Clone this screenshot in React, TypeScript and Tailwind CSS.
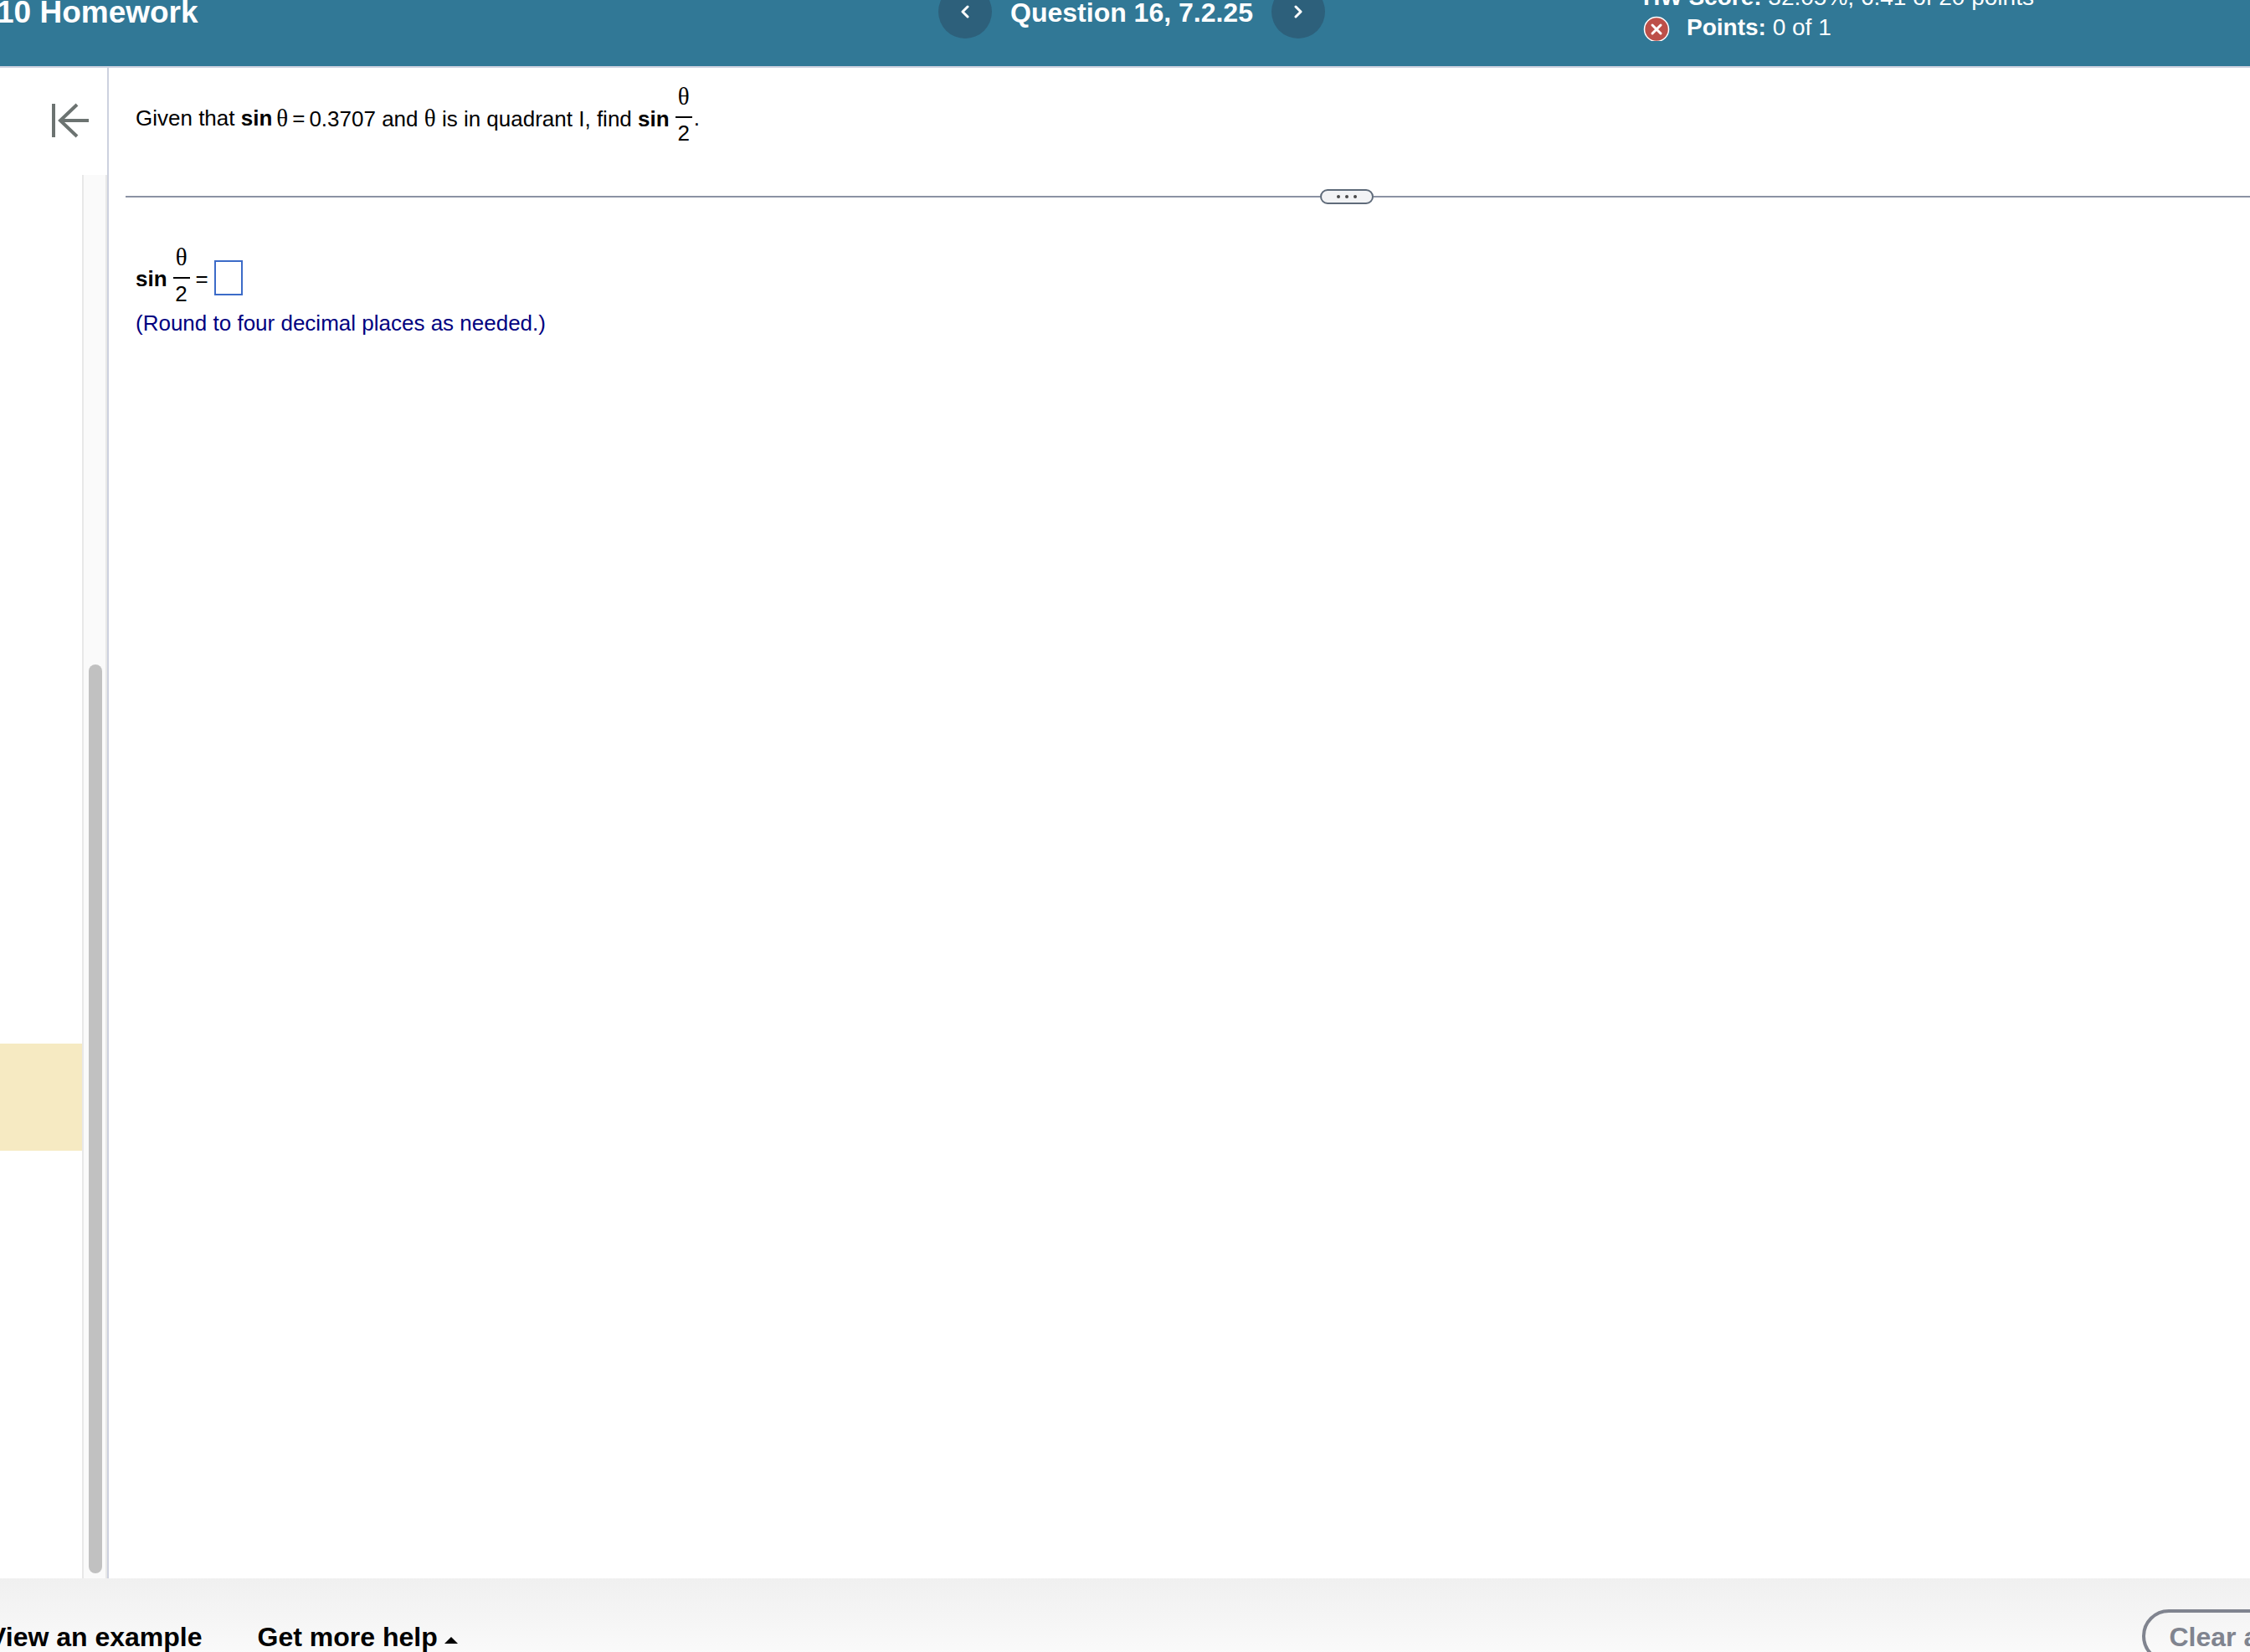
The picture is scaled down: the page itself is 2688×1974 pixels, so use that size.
import { useState } from "react";

const QUESTION_COUNT = 13;
const CURRENT_ROW = 9;

function Theta() {
  return (
    <span className="font-['Liberation_Serif',serif] text-[29px] leading-none">
      θ
    </span>
  );
}

function HalfTheta() {
  return (
    <span className="inline-flex flex-col items-stretch w-5 ml-[7px] mr-0.5 text-center leading-9">
      <span className="h-10 leading-[34px]">
        <Theta />
      </span>
      <span className="h-0.5 bg-black" />
      <span className="h-10">2</span>
    </span>
  );
}

function Header() {
  return (
    <header className="relative shrink-0 -mt-[51px] h-[132px] pl-4 grid grid-cols-[1fr_auto_1fr] items-center bg-[#317896] border-b-2 border-[#cdd1df] text-white">
      <h1 className="-ml-5 pt-0.5 text-[37px] leading-9 font-bold whitespace-nowrap">
        10 Homework
      </h1>
      <nav className="flex items-center gap-[22px]">
        <button
          aria-label="Previous question"
          className="w-16 h-16 rounded-full bg-[#2d607b] flex items-center justify-center"
        >
          <svg width="12" height="16" viewBox="0 0 12 16" fill="none">
            <path
              d="M9 2L3 8l6 6"
              stroke="white"
              strokeWidth="3"
              strokeLinecap="round"
              strokeLinejoin="round"
            />
          </svg>
        </button>
        <h2 className="pt-0.5 text-[32px] leading-9 font-bold whitespace-nowrap">
          Question 16, 7.2.25
        </h2>
        <button
          aria-label="Next question"
          className="w-16 h-16 rounded-full bg-[#2d607b] flex items-center justify-center"
        >
          <svg width="12" height="16" viewBox="0 0 12 16" fill="none">
            <path
              d="M3 2l6 6-6 6"
              stroke="white"
              strokeWidth="3"
              strokeLinecap="round"
              strokeLinejoin="round"
            />
          </svg>
        </button>
      </nav>
      <div className="flex justify-center pl-[122px]">
        <div className="pt-0.5 text-[28px] leading-9 whitespace-nowrap">
          <p>
            <b>HW Score:</b> 32.05%, 6.41 of 20 points
          </p>
          <p className="flex items-center gap-5">
            <svg width="32" height="32" viewBox="0 0 32 32" fill="none">
              <circle
                cx="16"
                cy="18"
                r="14.5"
                fill="#bd5049"
                stroke="white"
                strokeWidth="1.5"
              />
              <path
                d="M11 13l10 10M21 13L11 23"
                stroke="white"
                strokeWidth="3"
                strokeLinecap="round"
              />
            </svg>
            <span>
              <b>Points:</b> 0 of 1
            </span>
          </p>
        </div>
      </div>
    </header>
  );
}

function Sidebar() {
  return (
    <aside className="w-[130px] shrink-0 flex flex-col border-r-2 border-[#cdd1df]">
      <div className="h-32 shrink-0 flex items-center justify-end pr-5">
        <button aria-label="Collapse question list">
          <svg width="48" height="44" viewBox="0 0 48 44" fill="none">
            <path
              d="M4 1v40M46 21H13M32 2L12 21l20 19"
              stroke="#6c7371"
              strokeWidth="4"
            />
          </svg>
        </button>
      </div>
      <div className="flex-1 min-h-0 flex">
        <ul className="flex-1 overflow-hidden">
          {Array.from({ length: QUESTION_COUNT }, (_, i) => (
            <li
              key={i}
              className={
                i === CURRENT_ROW
                  ? "h-32 bg-[#f6eac2]"
                  : "h-32 first:-mt-[114px]"
              }
            />
          ))}
        </ul>
        <div className="w-[30px] shrink-0 flex flex-col items-center pb-1.5 bg-[#fafafa] border-x-2 border-[#e8e8e8]">
          <div className="grow-[35] basis-0" />
          <div className="grow-[65] basis-0 w-4 ml-0.5 rounded-full bg-[#c1c1c1]" />
        </div>
      </div>
    </aside>
  );
}

function Question() {
  const [answer, setAnswer] = useState("");

  return (
    <main className="flex-1 min-w-0 pt-[18px] text-[26px] leading-[26px] text-black">
      <p className="flex items-center px-8 whitespace-pre">
        <span className="pt-0.5">
          Given that <b>sin</b>
        </span>
        <span className="ml-[5px] pt-0.5">
          <Theta />
        </span>
        <span className="mx-[5px] pt-0.5">=</span>
        <span className="pt-0.5">
          0.3707 and <Theta /> is in quadrant I, find <b>sin</b>
        </span>
        <HalfTheta />
        <span className="pt-0.5">.</span>
      </p>
      <div className="flex items-center mt-[45px] ml-5">
        <div className="grow-[15] basis-0 h-0.5 bg-[#8b92a3]" />
        <button
          aria-label="Resize panes"
          className="w-16 h-[18px] rounded-full border-2 border-[#5f6b7a] bg-[#f2f3f5] flex items-center justify-center gap-1.5"
        >
          <span className="w-1 h-1 rounded-full bg-[#4a4a4a]" />
          <span className="w-1 h-1 rounded-full bg-[#4a4a4a]" />
          <span className="w-1 h-1 rounded-full bg-[#4a4a4a]" />
        </button>
        <div className="grow-[11] basis-0 h-0.5 bg-[#8b92a3]" />
      </div>
      <div className="mt-[47px] px-8">
        <label className="flex items-center">
          <b className="pt-0.5">sin</b>
          <HalfTheta />
          <span className="mx-[5px] pt-0.5">=</span>
          <input
            type="text"
            value={answer}
            onChange={(e) => setAnswer(e.target.value)}
            className="w-[34px] h-[42px] ml-0.5 border-2 border-[#3c6bc8] text-center outline-none"
          />
        </label>
        <p className="text-[#000080]">
          (Round to four decimal places as needed.)
        </p>
      </div>
    </main>
  );
}

function Footer() {
  return (
    <footer className="shrink-0 -mb-[50px] h-[138px] flex items-center justify-between bg-linear-to-b from-[#f0f0f0] to-white text-[32px] leading-9 font-bold whitespace-nowrap text-black">
      <div className="flex items-center gap-[66px] -ml-3.5 pt-0.5">
        <button className="font-bold">View an example</button>
        <button className="font-bold flex items-center gap-2">
          Get more help
          <svg width="16" height="8" viewBox="0 0 16 8" className="mt-2">
            <path d="M0 8l8-8 8 8z" fill="black" />
          </svg>
        </button>
      </div>
      <button className="-mr-[60px] h-16 px-7 pt-0.5 rounded-full border-4 border-[#80848f] text-[#80848f] font-bold">
        Clear all
      </button>
    </footer>
  );
}

export default function App() {
  return (
    <div className="h-screen overflow-hidden flex flex-col bg-white font-['Liberation_Sans',Arial,sans-serif]">
      <Header />
      <div className="flex-1 min-h-0 flex">
        <Sidebar />
        <Question />
      </div>
      <Footer />
    </div>
  );
}
